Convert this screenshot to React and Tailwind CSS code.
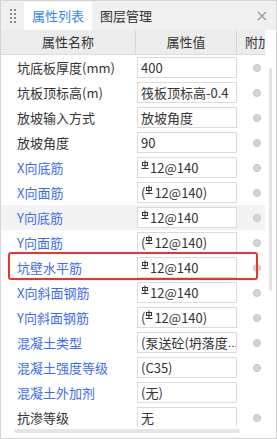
import React from 'react';

const BLUE = 'text-[#3d6cf0]';

const rows = [
    { name: '坑底板厚度(mm)', value: '400', blue: false },
    { name: '坑板顶标高(m)', value: '筏板顶标高-0.4', blue: false },
    { name: '放坡输入方式', value: '放坡角度', blue: false },
    { name: '放坡角度', value: '90', blue: false },
    { name: 'X向底筋', value: '12@140', bar: true, blue: true },
    { name: 'X向面筋', value: '12@140)', bar: true, paren: true, blue: true },
    { name: 'Y向底筋', value: '12@140', bar: true, blue: true, hl: true },
    { name: 'Y向面筋', value: '12@140)', bar: true, paren: true, blue: true },
    { name: '坑壁水平筋', value: '12@140', bar: true, blue: true, boxed: true },
    { name: 'X向斜面钢筋', value: '12@140', bar: true, blue: true },
    { name: 'Y向斜面钢筋', value: '12@140)', bar: true, paren: true, blue: true },
    { name: '混凝土类型', value: '(泵送砼(坍落度', more: true, blue: true },
    { name: '混凝土强度等级', value: '(C35)', blue: true },
    { name: '混凝土外加剂', value: '(无)', blue: true, noDot: true },
    { name: '抗渗等级', value: '无', blue: false },
];

// HRB400 rebar mark
function RebarMark() {
    return (
        <svg width="8" height="9" viewBox="0 0 8 9" className="inline-block mr-[1px] -translate-y-[3px]" fill="none" stroke="#333" strokeWidth="1">
            <path d="M4 0.5V8.5" />
            <rect x="1.5" y="2.5" width="5" height="3" />
            <path d="M0.5 8.5H7.5" />
        </svg>
    );
}

export default function App() {
    return (
        <div
            className="relative w-[277px] h-[439px] bg-white border border-[#d4d4d4] overflow-hidden text-[13px] text-[#333]"
            style={{ fontFamily: '"Noto Sans CJK SC", "Noto Sans", sans-serif' }}
        >
            {/* Tab bar */}
            <div className="flex items-stretch h-[29px] bg-[#f0f0f0]">
                <div className="w-[23px] flex items-center justify-center">
                    <div className="grid grid-cols-2 gap-x-[2px] gap-y-[2px]">
                        {Array.from({ length: 8 }).map((_, i) => (
                            <span key={i} className="w-[2px] h-[2px] bg-[#8a8a8a]" />
                        ))}
                    </div>
                </div>
                <div className="mt-[1px] w-[68px] bg-white flex items-center justify-center text-[#3a86f2]">属性列表</div>
                <div className="w-[68px] flex items-center justify-center">图层管理</div>
                <div className="ml-auto mr-[9px] flex items-center">
                    <svg width="10" height="10" viewBox="0 0 10 10" stroke="#9a9a9a" strokeWidth="1.2">
                        <path d="M1 1L9 9M9 1L1 9" />
                    </svg>
                </div>
            </div>

            <div className="flex">
                <div className="w-[264px]">
                    {/* Header */}
                    <div className="grid grid-cols-[135px_101px_28px] h-[25px] bg-[#ececec] border-b border-[#dcdcdc]">
                        <div className="flex items-center justify-center border-r border-[#d6d6d6]">属性名称</div>
                        <div className="flex items-center justify-center border-r border-[#d6d6d6]">属性值</div>
                        <div className="flex items-center pl-[8px] whitespace-nowrap overflow-hidden">附加</div>
                    </div>

                    {/* Body */}
                    <div className="h-[371px] overflow-hidden">
                        {rows.map((r) => (
                            <div
                                key={r.name}
                                className={`relative grid grid-cols-[136px_100px_28px] h-[25px] ${r.hl ? 'bg-[#f3f3f3]' : ''}`}
                            >
                                <div className={`flex items-center pl-[16px] ${r.blue ? BLUE : ''}`}>{r.name}</div>
                                <div className="flex items-center">
                                    <div className="w-[100px] h-[21px] border border-[#dadada] bg-white flex items-center pl-[3px] whitespace-nowrap overflow-hidden">
                                        {r.paren && <span>(</span>}
                                        {r.bar && <RebarMark />}
                                        <span>{r.value}</span>
                                        {r.more && <span className="font-['Liberation_Sans'] text-[12px]">...</span>}
                                    </div>
                                </div>
                                <div className="flex items-center pl-[16px]">
                                    {!r.noDot && (
                                        <span className="w-[8px] h-[8px] rounded-full bg-[#d4d4d4] border border-[#c4c4c4]" />
                                    )}
                                </div>
                                {r.boxed && (
                                    <div className="absolute left-[7px] -top-[3px] w-[250px] h-[28px] border-2 border-[#e8332e] rounded-[3px] pointer-events-none" />
                                )}
                            </div>
                        ))}
                    </div>

                    {/* Horizontal scrollbar */}
                    <div className="h-[10px] flex items-center pl-[13px]">
                        <div className="w-[226px] h-[4px] rounded-full bg-[#e6e6e6]" />
                    </div>
                </div>

                {/* Vertical scrollbar */}
                <div className="flex-1 pl-[4px] pt-[38px]">
                    <div className="w-[3px] h-[223px] rounded-full bg-[#e2e2e2]" />
                </div>
            </div>
        </div>
    );
}
